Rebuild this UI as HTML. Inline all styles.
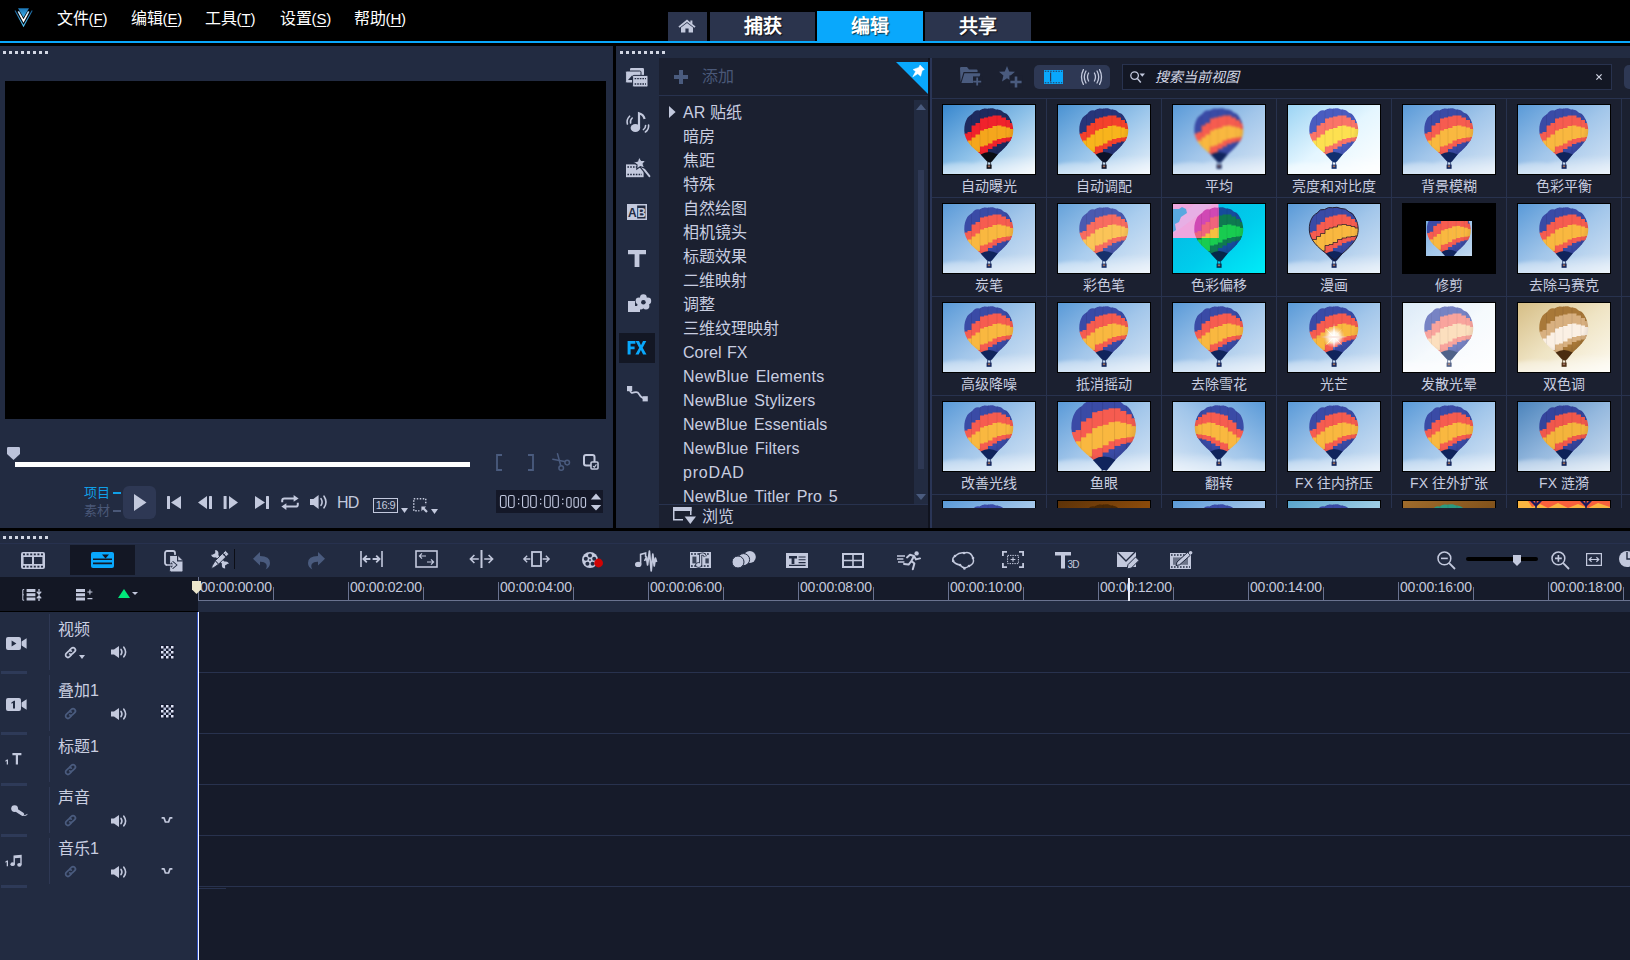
<!DOCTYPE html>
<html lang="zh-CN"><head><meta charset="utf-8"><title>Corel VideoStudio</title>
<style>
*{margin:0;padding:0;box-sizing:border-box}
html,body{width:1630px;height:960px;overflow:hidden;background:#000}
body{font-family:"Liberation Sans",sans-serif;color:#c3c9dd;position:relative;font-size:16px}
.a{position:absolute}
.p{position:absolute;background:#222b41}
svg{position:absolute;overflow:visible}
.dots{position:absolute;height:3px;width:45px;background:repeating-linear-gradient(90deg,#d3d7e4 0 3px,transparent 3px 6px)}
.menu{position:absolute;top:8px;height:22px;line-height:22px;font-size:16px;color:#fff;white-space:nowrap;letter-spacing:-.2px}
.menu u{text-decoration:underline;text-underline-offset:2px}
.tab{position:absolute;top:12px;height:29px;background:#2b344d;color:#fff;font-weight:bold;font-size:19px;line-height:30px;text-align:center;text-shadow:1px 1px 1px rgba(0,0,0,.7)}
.li{position:absolute;left:683px;height:24px;line-height:24px;font-size:16px;color:#c9cee0;white-space:nowrap}
.lb{position:absolute;width:115px;height:18px;line-height:18px;font-size:14px;text-align:center;color:#c9cee0;white-space:nowrap}
.th{position:absolute;width:94px;height:71px;border:1px solid #000;overflow:hidden;background:#9cc4e6}
.th svg{left:0;top:0;width:92px;height:69px}
.rl{position:absolute;top:579px;height:16px;line-height:16px;font-size:14px;letter-spacing:-.2px;color:#c3c9dd;white-space:nowrap}
.tn{position:absolute;left:58px;height:20px;line-height:20px;font-size:16px;color:#c9cee0;white-space:nowrap}
</style></head><body>
<svg style="left:14px;top:7px" width="20" height="20" viewBox="0 0 20 20">
<defs><linearGradient id="lg1" x1="0" y1="0" x2="0" y2="1"><stop offset="0" stop-color="#1c76b6"/><stop offset="1" stop-color="#3fb0e8"/></linearGradient>
<linearGradient id="lg2" x1="0" y1="0" x2="0" y2="1"><stop offset="0" stop-color="#175f98"/><stop offset="1" stop-color="#55c4f6"/></linearGradient>
<linearGradient id="lg3" x1="0" y1="0" x2="0" y2="1"><stop offset="0" stop-color="#a8d8f8"/><stop offset=".5" stop-color="#fff"/></linearGradient></defs>
<path d="M4 1.2H15L9.5 10.4Z" fill="url(#lg1)"/>
<path d="M4.3 4.4L9.5 14L14.7 4.4" fill="none" stroke="url(#lg3)" stroke-width="1.6"/>
<path d="M1 3.5L9.5 19L18.2 3.4" fill="none" stroke="url(#lg2)" stroke-width="1.1"/></svg>
<div class="menu" style="left:57px">文件<span style="font-size:15px">(<u>F</u>)</span></div>
<div class="menu" style="left:131px">编辑<span style="font-size:15px">(<u>E</u>)</span></div>
<div class="menu" style="left:205px">工具<span style="font-size:15px">(<u>T</u>)</span></div>
<div class="menu" style="left:280px">设置<span style="font-size:15px">(<u>S</u>)</span></div>
<div class="menu" style="left:354px">帮助<span style="font-size:15px">(<u>H</u>)</span></div>
<div class="tab" style="left:668px;width:39px"></div>
<svg style="left:678px;top:19px" width="18" height="14" viewBox="0 0 18 14"><path d="M9 0.6 L0.4 7.6 L1.6 8.8 L9 2.9 L16.4 8.8 L17.6 7.6 L14.4 5 L14.4 1.4 L12.4 1.4 L12.4 3.4Z M3 8.6 L9 3.9 L15 8.6 L15 13.6 L10.6 13.6 L10.6 9.6 L7.4 9.6 L7.4 13.6 L3 13.6Z" fill="#c3c9dd"/></svg>
<div class="tab" style="left:710px;width:105px">捕获</div>
<div class="tab" style="left:817px;width:106px;top:11px;height:30px;line-height:32px;background:#09a8fc">编辑</div>
<div class="tab" style="left:925px;width:106px">共享</div>
<div class="a" style="left:0;top:41px;width:1630px;height:2px;background:#09a8fc"></div>
<div class="p" style="left:0;top:46px;width:613px;height:482px"></div>
<div class="dots" style="left:3px;top:51px"></div>
<div class="a" style="left:5px;top:81px;width:601px;height:338px;background:#000"></div>
<svg style="left:7px;top:447px" width="13" height="13" viewBox="0 0 13 13"><path d="M1.2 0H11.8Q13 0 13 1.2V7L6.5 13L0 7V1.2Q0 0 1.2 0Z" fill="#bcc3da"/></svg>
<div class="a" style="left:15px;top:462px;width:455px;height:5px;background:#fff"></div>
<svg style="left:496px;top:454px" width="7" height="17" viewBox="0 0 7 17" ><path d="M6 1H1V16H6" fill="none" stroke="#4a5b7e" stroke-width="1.8"/></svg>
<svg style="left:527px;top:454px" width="7" height="17" viewBox="0 0 7 17" ><path d="M1 1H6V16H1" fill="none" stroke="#4a5b7e" stroke-width="1.8"/></svg>
<svg style="left:552px;top:453px" width="18" height="18" viewBox="0 0 18 18" ><g fill="none" stroke="#4a5b7e" stroke-width="1.5" stroke-linecap="round"><path d="M5.5 0.8L8.6 12.2"/><path d="M0.8 6.2L12.6 8.6"/><circle cx="9.2" cy="15" r="2.3"/><circle cx="15.2" cy="9.6" r="2.3"/></g></svg>
<svg style="left:583px;top:454px" width="16" height="16" viewBox="0 0 16 16" ><rect x="1" y="1" width="10.5" height="10.5" rx="2" fill="none" stroke="#c3c9dd" stroke-width="2"/><rect x="8" y="8" width="7" height="7" rx="1" fill="#222b41" stroke="#c3c9dd" stroke-width="1.6"/><path d="M10 12.2L11.4 13.2L13.4 10.4" fill="none" stroke="#c3c9dd" stroke-width="1.1"/></svg>
<div class="a" style="left:84px;top:484px;font-size:13px;line-height:18px;color:#10a0e8;white-space:nowrap">项目</div>
<div class="a" style="left:113px;top:492px;width:8px;height:2px;background:#10a0e8"></div>
<div class="a" style="left:84px;top:502px;font-size:13px;line-height:18px;color:#4a5878;white-space:nowrap">素材</div>
<div class="a" style="left:113px;top:510px;width:8px;height:2px;background:#4a5878"></div>
<div class="a" style="left:123px;top:486px;width:33px;height:33px;border-radius:6px;background:#2e3854"></div>
<svg style="left:134px;top:494px" width="13" height="17" viewBox="0 0 13 17" ><path d="M0 0L12.5 8.5L0 17Z" fill="#c3c9dd"/></svg>
<svg style="left:167px;top:496px" width="15" height="13" viewBox="0 0 15 13" ><rect x="0" y="0" width="3" height="13" rx=".6" fill="#c3c9dd"/><path d="M14 0V13L4 6.5Z" fill="#c3c9dd"/></svg>
<svg style="left:198px;top:496px" width="15" height="13" viewBox="0 0 15 13" ><path d="M9 0V13L0 6.5Z" fill="#c3c9dd"/><rect x="11" y="0" width="3" height="13" rx=".6" fill="#c3c9dd"/></svg>
<svg style="left:223px;top:496px" width="15" height="13" viewBox="0 0 15 13" ><rect x="0.6" y="0" width="3" height="13" rx=".6" fill="#c3c9dd"/><path d="M6 0V13L15 6.5Z" fill="#c3c9dd"/></svg>
<svg style="left:255px;top:496px" width="15" height="13" viewBox="0 0 15 13" ><path d="M0 0V13L10 6.5Z" fill="#c3c9dd"/><rect x="11" y="0" width="3" height="13" rx=".6" fill="#c3c9dd"/></svg>
<svg style="left:281px;top:495px" width="18" height="15" viewBox="0 0 18 15" ><g fill="none" stroke="#c3c9dd" stroke-width="2"><path d="M1.2 7.2V5.6Q1.2 3.4 3.4 3.4H13.4"/><path d="M16.8 7.8V9.4Q16.8 11.6 14.6 11.6H4.6"/></g><path d="M12.6 0L17.6 3.4L12.6 6.8Z" fill="#c3c9dd"/><path d="M5.4 8.2L0.4 11.6L5.4 15Z" fill="#c3c9dd"/></svg>
<svg style="left:310px;top:495px" width="19" height="14" viewBox="0 0 19 14" ><path d="M0 4H3.4L8.6 0V14L3.4 10H0Z" fill="#c3c9dd"/><path d="M11 3.6Q13.2 7 11 10.4M14 1.2Q18 7 14 12.8" fill="none" stroke="#c3c9dd" stroke-width="1.6" stroke-linecap="round"/></svg>
<div class="a" style="left:337px;top:494px;font-size:16px;line-height:18px;color:#c3c9dd;letter-spacing:-.8px">HD</div>
<div class="a" style="left:373px;top:498px;width:25px;height:15px;border:1px solid #c3c9dd;font-size:11px;line-height:13px;text-align:center;color:#c3c9dd;letter-spacing:-.5px">16:9</div>
<svg style="left:401px;top:508px" width="7" height="5" viewBox="0 0 7 5" ><path d="M0 0H7L3.5 5Z" fill="#c3c9dd"/></svg>
<svg style="left:413px;top:498px" width="15" height="15" viewBox="0 0 15 15" ><rect x=".75" y=".75" width="12" height="12" fill="none" stroke="#c3c9dd" stroke-width="1.5" stroke-dasharray="1.5 1.5"/><rect x="6.5" y="6.5" width="9" height="9" fill="#222b41"/><path d="M8.4 8.4H13.2L11.6 10L14.8 13.2L13.2 14.8L10 11.6L8.4 13.2Z" fill="#c3c9dd"/></svg>
<svg style="left:431px;top:509px" width="7" height="5" viewBox="0 0 7 5" ><path d="M0 0H7L3.5 5Z" fill="#c3c9dd"/></svg>
<div class="a" style="left:496px;top:490px;width:107px;height:23px;background:#141828"></div>
<svg style="left:496px;top:490px" width="107" height="23" viewBox="0 0 107 23" ><rect x="4.45" y="5.55" width="5.6" height="11.9" rx="1.6" fill="none" stroke="#c0c7de" stroke-width="1.1"/><rect x="12.55" y="5.55" width="5.6" height="11.9" rx="1.6" fill="none" stroke="#c0c7de" stroke-width="1.1"/><rect x="26.55" y="5.55" width="5.6" height="11.9" rx="1.6" fill="none" stroke="#c0c7de" stroke-width="1.1"/><rect x="34.65" y="5.55" width="5.6" height="11.9" rx="1.6" fill="none" stroke="#c0c7de" stroke-width="1.1"/><rect x="48.65" y="5.55" width="5.6" height="11.9" rx="1.6" fill="none" stroke="#c0c7de" stroke-width="1.1"/><rect x="56.75" y="5.55" width="5.6" height="11.9" rx="1.6" fill="none" stroke="#c0c7de" stroke-width="1.1"/><rect x="70.75" y="7.45" width="4.4" height="9.9" rx="1.6" fill="none" stroke="#c0c7de" stroke-width="1.1"/><rect x="77.95" y="7.45" width="4.4" height="9.9" rx="1.6" fill="none" stroke="#c0c7de" stroke-width="1.1"/><rect x="85.15" y="7.45" width="4.4" height="9.9" rx="1.6" fill="none" stroke="#c0c7de" stroke-width="1.1"/><rect x="22.0" y="8.6" width="1.3" height="1.4" fill="#c0c7de"/><rect x="22.0" y="13" width="1.3" height="1.4" fill="#c0c7de"/><rect x="44.0" y="8.6" width="1.3" height="1.4" fill="#c0c7de"/><rect x="44.0" y="13" width="1.3" height="1.4" fill="#c0c7de"/><rect x="66.1" y="8.6" width="1.3" height="1.4" fill="#c0c7de"/><rect x="66.1" y="13" width="1.3" height="1.4" fill="#c0c7de"/><path d="M94.8 9.4L100 3.6L105.2 9.4Z M94.8 15L100 20.6L105.2 15Z" fill="#c3c9dd"/></svg>
<div class="p" style="left:616px;top:46px;width:1014px;height:482px"></div>
<div class="dots" style="left:620px;top:51px"></div>
<svg style="left:625px;top:68px" width="23" height="19" viewBox="0 0 23 19" ><rect x="5" y="0" width="14" height="11" rx="1.2" fill="#c3c9dd"/><rect x="0.6" y="3" width="15.4" height="12" rx="1.2" fill="#c3c9dd" stroke="#222b41" stroke-width="1"/><path d="M3 12L7 7.4L10 12Z" fill="#222b41"/><rect x="7.6" y="7.4" width="15.4" height="11.6" rx="1.2" fill="#c3c9dd" stroke="#222b41" stroke-width="1"/><path d="M9.6 10.6H21M9.6 16H21" stroke="#222b41" stroke-width="1.4" stroke-dasharray="1.6 1"/></svg>
<svg style="left:626px;top:112px" width="24" height="21" viewBox="0 0 24 21" ><ellipse cx="9.4" cy="16" rx="4.8" ry="4" fill="#c3c9dd"/><path d="M13 16V1.2Q17.6 2.4 18.6 7" fill="none" stroke="#c3c9dd" stroke-width="2.2"/><path d="M6.2 6Q4 8 4.6 11M3.6 4.2Q0.2 7.6 1.4 12" fill="none" stroke="#c3c9dd" stroke-width="1.6" stroke-linecap="round"/><path d="M17.4 17.6Q19.6 16.4 19.6 13.6M19.4 20Q23 17.6 22.6 13" fill="none" stroke="#c3c9dd" stroke-width="1.6" stroke-linecap="round"/></svg>
<svg style="left:626px;top:157px" width="25" height="21" viewBox="0 0 25 21" ><rect x="0" y="7.4" width="17.6" height="12.8" fill="#c3c9dd"/><path d="M1.4 10H16M1.4 17.6H16" stroke="#222b41" stroke-width="1.5" stroke-dasharray="1.6 1.2"/><path d="M15 8.6L23.6 19.4" stroke="#222b41" stroke-width="4.2"/><path d="M15 8.6L23.4 19.2" stroke="#c3c9dd" stroke-width="2" stroke-linecap="round"/><path d="M13.0 -0.3L15.4 3.5L19.9 3.4L17.1 6.9L18.6 11.1L14.3 9.5L10.8 12.2L11.0 7.7L7.3 5.1L11.7 4.0Z" fill="#c3c9dd" stroke="#222b41" stroke-width="1.1"/></svg>
<svg style="left:627px;top:204px" width="20" height="16" viewBox="0 0 20 16" ><rect x=".75" y=".75" width="18.5" height="14.5" fill="none" stroke="#c3c9dd" stroke-width="1.5"/><rect x=".75" y=".75" width="9.4" height="14.5" fill="#c3c9dd"/><text x="5.3" y="12.6" font-family="Liberation Sans" font-weight="bold" font-size="12" text-anchor="middle" fill="#222b41">A</text><text x="14.6" y="12.6" font-family="Liberation Sans" font-weight="bold" font-size="12" text-anchor="middle" fill="#c3c9dd">B</text></svg>
<svg style="left:628px;top:250px" width="18" height="17" viewBox="0 0 18 17" ><path d="M0 0H18V4.2H11.4V17H6.6V4.2H0Z" fill="#c3c9dd"/></svg>
<svg style="left:628px;top:294px" width="23" height="18" viewBox="0 0 23 18" ><path d="M0 7H7V12H12V18H0Z" fill="#c3c9dd"/><g fill="#c3c9dd"><circle cx="15.4" cy="3.6" r="3.4"/><circle cx="19.8" cy="7" r="3.4"/><circle cx="18" cy="12" r="3.4"/><circle cx="12.6" cy="12" r="3.4"/><circle cx="11" cy="7" r="3.4"/></g><circle cx="15.4" cy="8.2" r="2.3" fill="#222b41"/></svg>
<div class="a" style="left:619px;top:333px;width:36px;height:30px;background:#131724"></div>
<svg style="left:627px;top:341px" width="20" height="14" viewBox="0 0 20 14" ><path d="M0.6 0H8.4V2.8H3.6V5.6H7.6V8.3H3.6V13.6H0.6Z" fill="#09a8fc"/><path d="M8.6 0H12L14 4.3L16 0H19.3L15.7 6.7L19.5 13.6H16.1L13.9 9.1L11.7 13.6H8.4L12.2 6.7Z" fill="#09a8fc"/></svg>
<svg style="left:627px;top:386px" width="21" height="16" viewBox="0 0 21 16" ><path d="M2.6 2.6C4 12 9 2 12 8C14 11.6 15.6 12.4 18 12.6" fill="none" stroke="#c3c9dd" stroke-width="1.7"/><rect x="0" y="0" width="5.2" height="5.2" fill="#c3c9dd"/><rect x="15.6" y="10.2" width="5.2" height="5.2" fill="#c3c9dd"/></svg>
<div class="a" style="left:659px;top:58px;width:269px;height:470px;background:#1b2030"></div>
<svg style="left:674px;top:70px" width="14" height="14" viewBox="0 0 14 14" ><path d="M5 0H9V5H14V9H9V14H5V9H0V5H5Z" fill="#4a5b7e"/></svg>
<div class="a" style="left:702px;top:66px;font-size:16px;line-height:22px;color:#4a5878;white-space:nowrap">添加</div>
<svg style="left:896px;top:62px" width="32" height="32" viewBox="0 0 32 32" ><path d="M0 0H32V32Z" fill="#09a8fc"/><path d="M24 3L28.4 7.4L26.2 8.6L24.6 14.2L21.8 11.8L16.8 14.8L19.6 9.6L17.1 7.6L22.8 5.4Z" fill="#fff" stroke="#fff" stroke-width=".5" stroke-linejoin="round"/></svg>
<div class="a" style="left:659px;top:95px;width:269px;height:1px;background:#28324e"></div>
<div class="a" style="left:0;top:96px;width:914px;height:408px;overflow:hidden">
<svg style="left:669px;top:10px" width="7" height="12" viewBox="0 0 7 12" ><path d="M0 0L6.6 6L0 12Z" fill="#c3c9dd"/></svg>
<div class="li" style="top:5px;letter-spacing:0px;word-spacing:0px">AR 贴纸</div>
<div class="li" style="top:29px;letter-spacing:0px;word-spacing:0px">暗房</div>
<div class="li" style="top:53px;letter-spacing:0px;word-spacing:0px">焦距</div>
<div class="li" style="top:77px;letter-spacing:0px;word-spacing:0px">特殊</div>
<div class="li" style="top:101px;letter-spacing:0px;word-spacing:0px">自然绘图</div>
<div class="li" style="top:125px;letter-spacing:0px;word-spacing:0px">相机镜头</div>
<div class="li" style="top:149px;letter-spacing:0px;word-spacing:0px">标题效果</div>
<div class="li" style="top:173px;letter-spacing:0px;word-spacing:0px">二维映射</div>
<div class="li" style="top:197px;letter-spacing:0px;word-spacing:0px">调整</div>
<div class="li" style="top:221px;letter-spacing:0px;word-spacing:0px">三维纹理映射</div>
<div class="li" style="top:245px;letter-spacing:0.05px;word-spacing:1px">Corel FX</div>
<div class="li" style="top:269px;letter-spacing:0.27px;word-spacing:2.0px">NewBlue Elements</div>
<div class="li" style="top:293px;letter-spacing:0.09px;word-spacing:2.0px">NewBlue Stylizers</div>
<div class="li" style="top:317px;letter-spacing:0.05px;word-spacing:2.0px">NewBlue Essentials</div>
<div class="li" style="top:341px;letter-spacing:0.18px;word-spacing:2.0px">NewBlue Filters</div>
<div class="li" style="top:365px;letter-spacing:0.8px;word-spacing:0px">proDAD</div>
<div class="li" style="top:389px;letter-spacing:0.1px;word-spacing:2.3px">NewBlue Titler Pro 5</div>
</div>
<div class="a" style="left:914px;top:100px;width:14px;height:404px;background:#222b41"></div>
<svg style="left:916px;top:104px" width="10" height="6" viewBox="0 0 10 6" ><path d="M0 6L5 0L10 6Z" fill="#4a5b7e"/></svg>
<div class="a" style="left:918px;top:170px;width:6px;height:299px;background:#2e3854"></div>
<svg style="left:916px;top:494px" width="10" height="6" viewBox="0 0 10 6" ><path d="M0 0L5 6L10 0Z" fill="#4a5b7e"/></svg>
<div class="a" style="left:659px;top:504px;width:269px;height:1px;background:#28324e"></div>
<svg style="left:673px;top:507px" width="23" height="17" viewBox="0 0 23 17" ><rect x=".75" y=".75" width="17" height="12" fill="none" stroke="#c3c9dd" stroke-width="1.5"/><rect x="0" y="0" width="18.5" height="4" fill="#c3c9dd"/><rect x="10" y="8" width="14" height="10" fill="#1b2030"/><path d="M11.6 9.4H23L17.3 17Z" fill="#c3c9dd"/></svg>
<div class="a" style="left:702px;top:506px;font-size:16px;line-height:22px;color:#c9cee0;white-space:nowrap">浏览</div>
<div class="a" style="left:928px;top:58px;width:2px;height:470px;background:#10131e"></div>
<div class="a" style="left:930px;top:58px;width:2px;height:470px;background:#2a3556"></div>
<div class="a" style="left:932px;top:58px;width:698px;height:470px;background:#1b2030"></div>
<div class="a" style="left:932px;top:98px;width:698px;height:1px;background:#28324e"></div>
<svg width="0" height="0" style="position:absolute"><defs>
<linearGradient id="skyV" x1="0" y1="0" x2="1" y2="1"><stop offset="0" stop-color="#3887ce"/><stop offset=".5" stop-color="#8cc0e8"/><stop offset="1" stop-color="#eef5fb"/></linearGradient>
<linearGradient id="skyV2" x1="0" y1="0" x2="1" y2="1"><stop offset="0" stop-color="#4a92d2"/><stop offset=".5" stop-color="#98c4ea"/><stop offset="1" stop-color="#e8f1fa"/></linearGradient>
<linearGradient id="skyPA" x1="0" y1="0" x2="1" y2="1"><stop offset="0" stop-color="#5a9ad8"/><stop offset=".5" stop-color="#a2c6ea"/><stop offset="1" stop-color="#d6e5f5"/></linearGradient>
<linearGradient id="skyBR" x1="0" y1="0" x2="1" y2="1"><stop offset="0" stop-color="#9cd4f4"/><stop offset=".5" stop-color="#e4f6ff"/><stop offset="1" stop-color="#ffffff"/></linearGradient>
<linearGradient id="skyP2" x1="0" y1="0" x2="1" y2="1"><stop offset="0" stop-color="#66a2da"/><stop offset=".5" stop-color="#aacdee"/><stop offset="1" stop-color="#dde9f6"/></linearGradient>
<linearGradient id="skyGL" x1="0" y1="0" x2="1" y2="1"><stop offset="0" stop-color="#d4e6f6"/><stop offset=".5" stop-color="#f4f9fd"/><stop offset="1" stop-color="#ffffff"/></linearGradient>
<linearGradient id="skySE" x1="0" y1="0" x2="1" y2="1"><stop offset="0" stop-color="#d6be86"/><stop offset=".5" stop-color="#efe4c4"/><stop offset="1" stop-color="#fdfaf0"/></linearGradient>
<linearGradient id="skyDK" x1="0" y1="0" x2="1" y2="1"><stop offset="0" stop-color="#4c84bc"/><stop offset=".5" stop-color="#94b8de"/><stop offset="1" stop-color="#cfdff0"/></linearGradient>
<linearGradient id="skyOR" x1="0" y1="0" x2="1" y2="1"><stop offset="0" stop-color="#5c3208"/><stop offset=".5" stop-color="#8a4a0a"/><stop offset="1" stop-color="#a8580a"/></linearGradient>
<linearGradient id="skyCY" x1="0" y1="0" x2="1" y2="1"><stop offset="0" stop-color="#58a4cc"/><stop offset=".5" stop-color="#9ccce4"/><stop offset="1" stop-color="#c8e4f2"/></linearGradient>
<linearGradient id="skyBN" x1="0" y1="0" x2="1" y2="1"><stop offset="0" stop-color="#a06c2c"/><stop offset=".5" stop-color="#84541c"/><stop offset="1" stop-color="#684010"/></linearGradient>
<linearGradient id="cl" x1="0" y1="0" x2="0" y2="1"><stop offset="0" stop-color="#fff" stop-opacity="0"/><stop offset=".5" stop-color="#fff" stop-opacity=".4"/><stop offset="1" stop-color="#fff" stop-opacity=".6"/></linearGradient>
<radialGradient id="shade" cx=".45" cy=".35" r=".7"><stop offset=".6" stop-color="#000" stop-opacity="0"/><stop offset="1" stop-color="#000" stop-opacity=".22"/></radialGradient>
<radialGradient id="gl"><stop offset="0" stop-color="#fff"/><stop offset=".45" stop-color="#fff" stop-opacity=".85"/><stop offset="1" stop-color="#ffd8d0" stop-opacity="0"/></radialGradient>
<clipPath id="env"><path d="M21.3 26C21 16 25.5 10.5 29 9.2Q32 4.4 36.6 5.5Q40.2 2.6 44.6 3.7Q49.2 2.5 53 4.5Q57.6 4 61 7.8Q65.2 9 67 13.6C70 18.6 71 25 69.6 30.6C68 37 61 44 54.6 49.4L47 56.4L38 49.4C30 43.4 21.6 36 21.3 26Z"/></clipPath>
<symbol id="bl" viewBox="0 0 92 69" overflow="visible"><g clip-path="url(#env)"><rect x="20" y="0" width="5.1" height="29.1" fill="var(--n)"/><rect x="20" y="28.5" width="5.1" height="9.1" fill="var(--r)"/><rect x="20" y="37" width="5.1" height="33.6" fill="var(--y)"/><rect x="24.5" y="0" width="4.6" height="27.6" fill="var(--n)"/><rect x="24.5" y="27" width="4.6" height="9.1" fill="var(--r)"/><rect x="24.5" y="35.5" width="4.6" height="35.1" fill="var(--y)"/><rect x="28.5" y="0" width="4.6" height="21.1" fill="var(--n)"/><rect x="28.5" y="20.5" width="4.6" height="12.6" fill="var(--r)"/><rect x="28.5" y="32.5" width="4.6" height="38.1" fill="var(--y)"/><rect x="32.5" y="0" width="5.1" height="18.6" fill="var(--n)"/><rect x="32.5" y="18" width="5.1" height="12.1" fill="var(--r)"/><rect x="32.5" y="29.5" width="5.1" height="18.1" fill="var(--y)"/><rect x="32.5" y="47" width="5.1" height="23.6" fill="var(--r)"/><rect x="37" y="0" width="4.6" height="14.1" fill="var(--n)"/><rect x="37" y="13.5" width="4.6" height="12.6" fill="var(--r)"/><rect x="37" y="25.5" width="4.6" height="16.6" fill="var(--y)"/><rect x="37" y="41.5" width="4.6" height="29.1" fill="var(--r)"/><rect x="41" y="0" width="4.6" height="13.1" fill="var(--n)"/><rect x="41" y="12.5" width="4.6" height="12.1" fill="var(--r)"/><rect x="41" y="24" width="4.6" height="17.1" fill="var(--y)"/><rect x="41" y="40.5" width="4.6" height="30.1" fill="var(--r)"/><rect x="45" y="0" width="5.1" height="12.1" fill="var(--n)"/><rect x="45" y="11.5" width="5.1" height="12.1" fill="var(--r)"/><rect x="45" y="23" width="5.1" height="16.1" fill="var(--y)"/><rect x="45" y="38.5" width="5.1" height="6.1" fill="var(--r)"/><rect x="45" y="44" width="5.1" height="26.6" fill="var(--n)"/><rect x="49.5" y="0" width="5.1" height="11.1" fill="var(--n)"/><rect x="49.5" y="10.5" width="5.1" height="11.1" fill="var(--r)"/><rect x="49.5" y="21" width="5.1" height="15.1" fill="var(--y)"/><rect x="49.5" y="35.5" width="5.1" height="6.6" fill="var(--r)"/><rect x="49.5" y="41.5" width="5.1" height="29.1" fill="var(--n)"/><rect x="54" y="0" width="5.1" height="11.1" fill="var(--n)"/><rect x="54" y="10.5" width="5.1" height="10.6" fill="var(--r)"/><rect x="54" y="20.5" width="5.1" height="14.1" fill="var(--y)"/><rect x="54" y="34" width="5.1" height="5.6" fill="var(--r)"/><rect x="54" y="39" width="5.1" height="31.6" fill="var(--n)"/><rect x="58.5" y="0" width="5.1" height="13.1" fill="var(--n)"/><rect x="58.5" y="12.5" width="5.1" height="9.6" fill="var(--r)"/><rect x="58.5" y="21.5" width="5.1" height="12.1" fill="var(--y)"/><rect x="58.5" y="33" width="5.1" height="5.1" fill="var(--r)"/><rect x="58.5" y="37.5" width="5.1" height="33.1" fill="var(--n)"/><rect x="63" y="0" width="4.6" height="15.6" fill="var(--n)"/><rect x="63" y="15" width="4.6" height="8.1" fill="var(--r)"/><rect x="63" y="22.5" width="4.6" height="10.6" fill="var(--y)"/><rect x="63" y="32.5" width="4.6" height="4.6" fill="var(--r)"/><rect x="63" y="36.5" width="4.6" height="34.1" fill="var(--n)"/><rect x="67" y="0" width="5.6" height="18.6" fill="var(--n)"/><rect x="67" y="18" width="5.6" height="6.6" fill="var(--r)"/><rect x="67" y="24" width="5.6" height="8.6" fill="var(--y)"/><rect x="67" y="32" width="5.6" height="4.1" fill="var(--r)"/><rect x="67" y="35.5" width="5.6" height="35.1" fill="var(--n)"/><path d="M28.5 8V50M37 5V52M45 3V55M54 4V50M63 8V44" stroke="#000" stroke-opacity=".12" stroke-width=".6"/><rect x="20" y="3" width="52" height="55" fill="url(#shade)"/></g>
<path d="M37.6 49.6Q46 44.6 54.6 49.6L49 56.6Q46.4 58.4 44 56.6Z" fill="var(--k)"/><path d="M44.6 57V60M47.6 57V60" stroke="var(--k)" stroke-width=".7"/><rect x="43.6" y="59.6" width="5" height="4.2" fill="var(--k)"/><rect x="44.8" y="60.4" width="2.4" height="1.8" fill="#9a6a58"/></symbol>
</defs></svg>
<div class="a" style="left:932px;top:99px;width:698px;height:409px;overflow:hidden">
<div class="a" style="left:114px;top:0;width:1px;height:409px;background:#28324e"></div>
<div class="a" style="left:229px;top:0;width:1px;height:409px;background:#28324e"></div>
<div class="a" style="left:344px;top:0;width:1px;height:409px;background:#28324e"></div>
<div class="a" style="left:459px;top:0;width:1px;height:409px;background:#28324e"></div>
<div class="a" style="left:574px;top:0;width:1px;height:409px;background:#28324e"></div>
<div class="a" style="left:689px;top:0;width:1px;height:409px;background:#28324e"></div>
<div class="a" style="left:0;top:98px;width:698px;height:1px;background:#28324e"></div>
<div class="a" style="left:0;top:197px;width:698px;height:1px;background:#28324e"></div>
<div class="a" style="left:0;top:296px;width:698px;height:1px;background:#28324e"></div>
<div class="a" style="left:0;top:395px;width:698px;height:1px;background:#28324e"></div>
<div class="th" style="left:10px;top:5px"><svg viewBox="0 0 92 69" style="--n:#1e2a5e;--r:#f0222c;--y:#f5a61c;--k:#0a0c14"><rect width="92" height="69" fill="url(#skyV)"/><path style="filter:blur(1.8px)" d="M-4 60Q14 55 30 58Q46 54 58 53Q74 49 96 50V74H-4Z" fill="url(#cl)"/><use href="#bl" width="92" height="69"/></svg></div>
<div class="lb" style="left:-0.5px;top:78px">自动曝光</div>
<div class="th" style="left:125px;top:5px"><svg viewBox="0 0 92 69" style="--n:#27357a;--r:#f4402c;--y:#f8b41c;--k:#0c1228"><rect width="92" height="69" fill="url(#skyV2)"/><path style="filter:blur(1.8px)" d="M-4 60Q14 55 30 58Q46 54 58 53Q74 49 96 50V74H-4Z" fill="url(#cl)"/><use href="#bl" width="92" height="69"/></svg></div>
<div class="lb" style="left:114.5px;top:78px">自动调配</div>
<div class="th" style="left:240px;top:5px"><svg viewBox="0 0 92 69" style="--n:#3a4ba6;--r:#f65c50;--y:#f9b840;--k:#10245c"><rect width="92" height="69" fill="url(#skyPA)"/><path style="filter:blur(1.8px)" d="M-4 60Q14 55 30 58Q46 54 58 53Q74 49 96 50V74H-4Z" fill="url(#cl)"/><g style="filter:blur(1.3px)"><use href="#bl" width="92" height="69"/></g></svg></div>
<div class="lb" style="left:229.5px;top:78px">平均</div>
<div class="th" style="left:355px;top:5px"><svg viewBox="0 0 92 69" style="--n:#4a5cc0;--r:#fa7468;--y:#fde050;--k:#123070"><rect width="92" height="69" fill="url(#skyBR)"/><path style="filter:blur(1.8px)" d="M-4 60Q14 55 30 58Q46 54 58 53Q74 49 96 50V74H-4Z" fill="url(#cl)"/><use href="#bl" width="92" height="69"/></svg></div>
<div class="lb" style="left:344.5px;top:78px">亮度和对比度</div>
<div class="th" style="left:470px;top:5px"><svg viewBox="0 0 92 69" style="--n:#3a4ba6;--r:#f65c50;--y:#f9b840;--k:#10245c"><rect width="92" height="69" fill="url(#skyPA)"/><path style="filter:blur(1.8px)" d="M-4 60Q14 55 30 58Q46 54 58 53Q74 49 96 50V74H-4Z" fill="url(#cl)"/><use href="#bl" width="92" height="69"/></svg></div>
<div class="lb" style="left:459.5px;top:78px">背景模糊</div>
<div class="th" style="left:585px;top:5px"><svg viewBox="0 0 92 69" style="--n:#3a4ba6;--r:#f65c50;--y:#f9b840;--k:#10245c"><rect width="92" height="69" fill="url(#skyPA)"/><path style="filter:blur(1.8px)" d="M-4 60Q14 55 30 58Q46 54 58 53Q74 49 96 50V74H-4Z" fill="url(#cl)"/><use href="#bl" width="92" height="69"/></svg></div>
<div class="lb" style="left:574.5px;top:78px">色彩平衡</div>
<div class="th" style="left:10px;top:104px"><svg viewBox="0 0 92 69" style="--n:#3a4ba6;--r:#f65c50;--y:#f9b840;--k:#10245c"><rect width="92" height="69" fill="url(#skyPA)"/><path style="filter:blur(1.8px)" d="M-4 60Q14 55 30 58Q46 54 58 53Q74 49 96 50V74H-4Z" fill="url(#cl)"/><use href="#bl" width="92" height="69"/></svg></div>
<div class="lb" style="left:-0.5px;top:177px">炭笔</div>
<div class="th" style="left:125px;top:104px"><svg viewBox="0 0 92 69" style="--n:#4a5ab0;--r:#f86c60;--y:#fbc458;--k:#16306c"><rect width="92" height="69" fill="url(#skyP2)"/><path style="filter:blur(1.8px)" d="M-4 60Q14 55 30 58Q46 54 58 53Q74 49 96 50V74H-4Z" fill="url(#cl)"/><use href="#bl" width="92" height="69"/></svg></div>
<div class="lb" style="left:114.5px;top:177px">彩色笔</div>
<div class="th" style="left:240px;top:104px"><svg viewBox="0 0 92 69"><defs><linearGradient id="cyg" x1="0" y1="0" x2="1" y2="1"><stop offset="0" stop-color="#04b4e0"/><stop offset=".55" stop-color="#00ccec"/><stop offset="1" stop-color="#00ecf8"/></linearGradient></defs><rect width="92" height="69" fill="url(#cyg)"/><g style="--n:#164c9c;--r:#0e7a50;--y:#18cc50;--k:#06284a"><use href="#bl" width="92" height="69"/></g><clipPath id="cs"><rect width="45.5" height="34"/></clipPath><g clip-path="url(#cs)"><rect width="46" height="34" fill="#efa6de"/><path d="M22 0L40 0L0 30L0 16Z" fill="#e4b4e8" opacity=".7"/><path d="M0 5H6L9 3L13 5L14 9L8 13L6 18L2 20L3 26L0 28Z" fill="#58a8e0"/><g style="--n:#d048b4;--r:#f0647c;--y:#f4c040;--k:#702070"><use href="#bl" width="92" height="69"/></g></g></svg></div>
<div class="lb" style="left:229.5px;top:177px">色彩偏移</div>
<div class="th" style="left:355px;top:104px"><svg viewBox="0 0 92 69" style="--n:#3a4ba6;--r:#f65c50;--y:#f9b840;--k:#10245c"><rect width="92" height="69" fill="url(#skyPA)"/><path style="filter:blur(1.8px)" d="M-4 60Q14 55 30 58Q46 54 58 53Q74 49 96 50V74H-4Z" fill="url(#cl)"/><use href="#bl" width="92" height="69"/><path d="M21.3 26C21 16 25.5 10.5 29 9.2Q32 4.4 36.6 5.5Q40.2 2.6 44.6 3.7Q49.2 2.5 53 4.5Q57.6 4 61 7.8Q65.2 9 67 13.6C70 18.6 71 25 69.6 30.6C68 37 61 44 54.6 49.4L47 56.4L38 49.4C30 43.4 21.6 36 21.3 26Z" fill="none" stroke="#201828" stroke-width=".9"/><path clip-path="url(#env)" d="M20 37H24.5V35.5H28.5V32.5H32.5V29.5H37V25.5H41V24H45V23H49.5V21H54V20.5H58.5V21.5H63V22.5H67V24H72M32.5 47H37V41.5H41V40.5H45V38.5H49.5V35.5H54V34H58.5V33H63V32.5H67V32H72" fill="none" stroke="#201828" stroke-width=".7"/></svg></div>
<div class="lb" style="left:344.5px;top:177px">漫画</div>
<div class="th" style="left:470px;top:104px"><svg viewBox="0 0 92 69" style="--n:#3a4ba6;--r:#f65c50;--y:#f9b840;--k:#10245c"><rect width="92" height="69" fill="#000"/><clipPath id="cr"><rect x="23" y="17" width="46" height="35"/></clipPath><g clip-path="url(#cr)"><g transform="translate(46 34.5) scale(.9) translate(-46 -34.5)"><rect width="92" height="69" fill="url(#skyPA)"/><path style="filter:blur(1.8px)" d="M-4 60Q14 55 30 58Q46 54 58 53Q74 49 96 50V74H-4Z" fill="url(#cl)"/><use href="#bl" width="92" height="69"/></g></g></svg></div>
<div class="lb" style="left:459.5px;top:177px">修剪</div>
<div class="th" style="left:585px;top:104px"><svg viewBox="0 0 92 69" style="--n:#3a4ba6;--r:#f65c50;--y:#f9b840;--k:#10245c"><rect width="92" height="69" fill="url(#skyPA)"/><path style="filter:blur(1.8px)" d="M-4 60Q14 55 30 58Q46 54 58 53Q74 49 96 50V74H-4Z" fill="url(#cl)"/><use href="#bl" width="92" height="69"/></svg></div>
<div class="lb" style="left:574.5px;top:177px">去除马赛克</div>
<div class="th" style="left:10px;top:203px"><svg viewBox="0 0 92 69" style="--n:#3a4ba6;--r:#f65c50;--y:#f9b840;--k:#10245c"><rect width="92" height="69" fill="url(#skyPA)"/><path style="filter:blur(1.8px)" d="M-4 60Q14 55 30 58Q46 54 58 53Q74 49 96 50V74H-4Z" fill="url(#cl)"/><use href="#bl" width="92" height="69"/></svg></div>
<div class="lb" style="left:-0.5px;top:276px">高级降噪</div>
<div class="th" style="left:125px;top:203px"><svg viewBox="0 0 92 69" style="--n:#3a4ba6;--r:#f65c50;--y:#f9b840;--k:#10245c"><rect width="92" height="69" fill="url(#skyPA)"/><path style="filter:blur(1.8px)" d="M-4 60Q14 55 30 58Q46 54 58 53Q74 49 96 50V74H-4Z" fill="url(#cl)"/><use href="#bl" width="92" height="69"/></svg></div>
<div class="lb" style="left:114.5px;top:276px">抵消摇动</div>
<div class="th" style="left:240px;top:203px"><svg viewBox="0 0 92 69" style="--n:#3a4ba6;--r:#f65c50;--y:#f9b840;--k:#10245c"><rect width="92" height="69" fill="url(#skyPA)"/><path style="filter:blur(1.8px)" d="M-4 60Q14 55 30 58Q46 54 58 53Q74 49 96 50V74H-4Z" fill="url(#cl)"/><use href="#bl" width="92" height="69"/></svg></div>
<div class="lb" style="left:229.5px;top:276px">去除雪花</div>
<div class="th" style="left:355px;top:203px"><svg viewBox="0 0 92 69" style="--n:#3a4ba6;--r:#f65c50;--y:#f9b840;--k:#10245c"><rect width="92" height="69" fill="url(#skyPA)"/><path style="filter:blur(1.8px)" d="M-4 60Q14 55 30 58Q46 54 58 53Q74 49 96 50V74H-4Z" fill="url(#cl)"/><use href="#bl" width="92" height="69"/><circle cx="46" cy="34" r="11" fill="url(#gl)"/><path d="M46 20L47 33L60 34L47 35L46 48L45 35L32 34L45 33Z M37 25L46.6 33.4L55 25L46.8 34L55 43L46 34.8L37 43L45.2 34Z" fill="#fff" opacity=".9"/><path d="M22 34H70" stroke="#e08060" stroke-width=".5" opacity=".7"/></svg></div>
<div class="lb" style="left:344.5px;top:276px">光芒</div>
<div class="th" style="left:470px;top:203px"><svg viewBox="0 0 92 69" style="--n:#5a68b8;--r:#f89088;--y:#fcd8b0;--k:#2a4070"><rect width="92" height="69" fill="url(#skyGL)"/><path style="filter:blur(1.8px)" d="M-4 60Q14 55 30 58Q46 54 58 53Q74 49 96 50V74H-4Z" fill="url(#cl)"/><g style="filter:blur(.7px)"><use href="#bl" width="92" height="69"/></g><rect width="92" height="69" fill="#fff" opacity=".18"/></svg></div>
<div class="lb" style="left:459.5px;top:276px">发散光晕</div>
<div class="th" style="left:585px;top:203px"><svg viewBox="0 0 92 69" style="--n:#a87838;--r:#d8b080;--y:#fbf0e4;--k:#4a2c10"><rect width="92" height="69" fill="url(#skySE)"/><path style="filter:blur(1.8px)" d="M-4 60Q14 55 30 58Q46 54 58 53Q74 49 96 50V74H-4Z" fill="url(#cl)"/><use href="#bl" width="92" height="69"/></svg></div>
<div class="lb" style="left:574.5px;top:276px">双色调</div>
<div class="th" style="left:10px;top:302px"><svg viewBox="0 0 92 69" style="--n:#3a4ba6;--r:#f65c50;--y:#f9b840;--k:#10245c"><rect width="92" height="69" fill="url(#skyPA)"/><path style="filter:blur(1.8px)" d="M-4 60Q14 55 30 58Q46 54 58 53Q74 49 96 50V74H-4Z" fill="url(#cl)"/><use href="#bl" width="92" height="69"/></svg></div>
<div class="lb" style="left:-0.5px;top:375px">改善光线</div>
<div class="th" style="left:125px;top:302px"><svg viewBox="0 0 92 69" style="--n:#3a4ba6;--r:#f65c50;--y:#f9b840;--k:#10245c"><rect width="92" height="69" fill="url(#skyPA)"/><path style="filter:blur(1.8px)" d="M-4 60Q14 55 30 58Q46 54 58 53Q74 49 96 50V74H-4Z" fill="url(#cl)"/><g transform="translate(46 36) scale(1.32) translate(-46 -33)"><use href="#bl" width="92" height="69"/></g></svg></div>
<div class="lb" style="left:114.5px;top:375px">鱼眼</div>
<div class="th" style="left:240px;top:302px"><svg viewBox="0 0 92 69" style="--n:#3a4ba6;--r:#f65c50;--y:#f9b840;--k:#10245c"><g transform="translate(92 0) scale(-1 1)"><rect width="92" height="69" fill="url(#skyPA)"/><path style="filter:blur(1.8px)" d="M-4 60Q14 55 30 58Q46 54 58 53Q74 49 96 50V74H-4Z" fill="url(#cl)"/><use href="#bl" width="92" height="69"/></g></svg></div>
<div class="lb" style="left:229.5px;top:375px">翻转</div>
<div class="th" style="left:355px;top:302px"><svg viewBox="0 0 92 69" style="--n:#3a4ba6;--r:#f65c50;--y:#f9b840;--k:#10245c"><rect width="92" height="69" fill="url(#skyPA)"/><path style="filter:blur(1.8px)" d="M-4 60Q14 55 30 58Q46 54 58 53Q74 49 96 50V74H-4Z" fill="url(#cl)"/><use href="#bl" width="92" height="69"/></svg></div>
<div class="lb" style="left:344.5px;top:375px">FX 往内挤压</div>
<div class="th" style="left:470px;top:302px"><svg viewBox="0 0 92 69" style="--n:#3a4ba6;--r:#f65c50;--y:#f9b840;--k:#10245c"><rect width="92" height="69" fill="url(#skyPA)"/><path style="filter:blur(1.8px)" d="M-4 60Q14 55 30 58Q46 54 58 53Q74 49 96 50V74H-4Z" fill="url(#cl)"/><use href="#bl" width="92" height="69"/></svg></div>
<div class="lb" style="left:459.5px;top:375px">FX 往外扩张</div>
<div class="th" style="left:585px;top:302px"><svg viewBox="0 0 92 69" style="--n:#34449c;--r:#f0584c;--y:#f4b43c;--k:#0e2258"><rect width="92" height="69" fill="url(#skyDK)"/><path style="filter:blur(1.8px)" d="M-4 60Q14 55 30 58Q46 54 58 53Q74 49 96 50V74H-4Z" fill="url(#cl)"/><use href="#bl" width="92" height="69"/></svg></div>
<div class="lb" style="left:574.5px;top:375px">FX 涟漪</div>
<div class="th" style="left:10px;top:401px"><svg viewBox="0 0 92 69" style="--n:#3a4ba6;--r:#f65c50;--y:#f9b840;--k:#10245c"><rect width="92" height="69" fill="url(#skyPA)"/><path style="filter:blur(1.8px)" d="M-4 60Q14 55 30 58Q46 54 58 53Q74 49 96 50V74H-4Z" fill="url(#cl)"/><use href="#bl" width="92" height="69"/></svg></div>
<div class="th" style="left:125px;top:401px"><svg viewBox="0 0 92 69" style="--n:#4a2804;--r:#5a3006;--y:#6a3808;--k:#2a1602"><rect width="92" height="69" fill="url(#skyOR)"/><path style="filter:blur(1.8px)" d="M-4 60Q14 55 30 58Q46 54 58 53Q74 49 96 50V74H-4Z" fill="url(#cl)"/><use href="#bl" width="92" height="69"/></svg></div>
<div class="th" style="left:240px;top:401px"><svg viewBox="0 0 92 69" style="--n:#3a4ba6;--r:#f65c50;--y:#f9b840;--k:#10245c"><rect width="92" height="69" fill="url(#skyPA)"/><path style="filter:blur(1.8px)" d="M-4 60Q14 55 30 58Q46 54 58 53Q74 49 96 50V74H-4Z" fill="url(#cl)"/><use href="#bl" width="92" height="69"/></svg></div>
<div class="th" style="left:355px;top:401px"><svg viewBox="0 0 92 69" style="--n:#3a4ba6;--r:#f65c50;--y:#f9b840;--k:#10245c"><rect width="92" height="69" fill="url(#skyCY)"/><path style="filter:blur(1.8px)" d="M-4 60Q14 55 30 58Q46 54 58 53Q74 49 96 50V74H-4Z" fill="url(#cl)"/><use href="#bl" width="92" height="69"/></svg></div>
<div class="th" style="left:470px;top:401px"><svg viewBox="0 0 92 69" style="--n:#2a9a80;--r:#e8c040;--y:#f0d060;--k:#2a1602"><rect width="92" height="69" fill="url(#skyBN)"/><path style="filter:blur(1.8px)" d="M-4 60Q14 55 30 58Q46 54 58 53Q74 49 96 50V74H-4Z" fill="url(#cl)"/><use href="#bl" width="92" height="69"/></svg></div>
<div class="th" style="left:585px;top:401px"><svg viewBox="0 0 92 69"><rect width="92" height="69" fill="#f8603c"/><path d="M0 0H10L14 6L22 3L30 7L40 2L50 7L60 3L70 7L80 2L92 6V10H0Z" fill="#fbbf40" opacity=".9"/><path d="M12 0L18 6L24 0L21 0L18 3L15 0ZM62 0L68 6L74 0L71 0L68 3L65 0Z" fill="#1a1a5c"/><path d="M18 0V7M68 0V7" stroke="#1a1a5c" stroke-width="1.6"/></svg></div>
</div>
<svg style="left:960px;top:67px" width="22" height="19" viewBox="0 0 22 19" ><path d="M0 1.2Q0 0 1.2 0H7L9 2.4H16.4Q17.6 2.4 17.6 3.6V5H3.6L0.6 15Z" fill="#4a5b7e"/><path d="M4.4 6.2H19.4Q20.6 6.2 20.2 7.4L17.6 16H1.4Z" fill="#4a5b7e"/><rect x="13" y="9.4" width="9.4" height="9.8" fill="#1b2030"/><path d="M17.2 10.6V18.6M13.2 14.6H21.2" stroke="#4a5b7e" stroke-width="1.8"/></svg>
<svg style="left:999px;top:66px" width="23" height="22" viewBox="0 0 23 22" ><path d="M8 0L10.2 5.4L16 5.8L11.6 9.6L13 15.4L8 12.2L3 15.4L4.4 9.6L0 5.8L5.8 5.4Z" fill="#4a5b7e"/><rect x="10.4" y="9.4" width="13" height="13" fill="#1b2030"/><path d="M17 10.4V21.6M11.4 16H22.6" stroke="#4a5b7e" stroke-width="2.6"/></svg>
<div class="a" style="left:1034px;top:65px;width:76px;height:24px;border-radius:5px;background:#2e3854"></div>
<svg style="left:1044px;top:70px" width="19" height="14" viewBox="0 0 19 14" ><rect x="0" y="0" width="19" height="14" fill="#09a8fc"/><path d="M0.8 1.3H18.2M0.8 12.7H18.2" stroke="#2e3854" stroke-width="1.1" stroke-dasharray="1.5 1.2"/><path d="M6.6 2.6V11.4" stroke="#2e3854" stroke-width="1.2"/></svg>
<svg style="left:1081px;top:69px" width="21" height="16" viewBox="0 0 21 16" ><g fill="none" stroke="#c3c9dd" stroke-width="1.3" stroke-linecap="round"><path d="M7.6 4Q5.4 8 7.6 12M13.4 4Q15.6 8 13.4 12"/><path d="M5 2Q1.6 8 5 14M16 2Q19.4 8 16 14"/><path d="M2.4 0.6Q-1.4 8 2.4 15.4M18.6 0.6Q22.4 8 18.6 15.4"/></g></svg>
<div class="a" style="left:1122px;top:64px;width:490px;height:26px;border:1px solid #28324e;background:#131724"></div>
<svg style="left:1130px;top:71px" width="15" height="12" viewBox="0 0 15 12" ><circle cx="4.6" cy="4.6" r="3.8" fill="none" stroke="#c3c9dd" stroke-width="1.3"/><path d="M7.4 7.6L10.8 11.4" stroke="#c3c9dd" stroke-width="1.5"/><path d="M9.6 2.4H15L12.3 5.8Z" fill="#c3c9dd"/></svg>
<div class="a" style="left:1155px;top:67px;font-size:14px;line-height:20px;font-style:italic;color:#d4d8e6;white-space:nowrap">搜索当前视图</div>
<svg style="left:1596px;top:74px" width="6" height="6" viewBox="0 0 6 6" ><path d="M.4 .4L5.6 5.6M5.6 .4L.4 5.6" stroke="#d4d8e6" stroke-width="1.2"/></svg>
<div class="a" style="left:1624px;top:65px;width:12px;height:24px;border-radius:5px;background:#2e3854"></div>
<div class="p" style="left:0;top:531px;width:1630px;height:429px"></div>
<div class="dots" style="left:3px;top:536px"></div>
<div class="a" style="left:0;top:543px;width:1630px;height:1px;background:#27314e"></div>
<svg style="left:21px;top:552px" width="24" height="17" viewBox="0 0 24 17" ><rect width="24" height="17" rx="2" fill="#c3c9dd"/><path d="M2 2.4H22M2 14.6H22" stroke="#222b41" stroke-width="1.6" stroke-dasharray="2 1.6"/><rect x="2.6" y="5" width="8.4" height="7" fill="#222b41"/><rect x="13" y="5" width="8.4" height="7" fill="#222b41"/></svg>
<div class="a" style="left:70px;top:545px;width:65px;height:30px;background:#131724"></div>
<svg style="left:91px;top:552px" width="23" height="16" viewBox="0 0 23 16" ><rect width="23" height="16" rx="2" fill="#09a8fc"/><path d="M2 7.2H21M2 11.4H21" stroke="#131724" stroke-width="1.6"/><path d="M11 2.4H18L14.5 6.6Z" fill="#131724"/></svg>
<svg style="left:164px;top:550px" width="19" height="22" viewBox="0 0 19 22" ><rect x="1" y="1" width="10" height="14" rx="2" fill="none" stroke="#c3c9dd" stroke-width="1.8"/><path d="M5.6 5.4H14L19 10.4V20.4Q19 22 17.4 22H7.2Q5.6 22 5.6 20.4Z" fill="#c3c9dd" stroke="#222b41" stroke-width="1"/><path d="M13.6 5.6V10.8H18.8" fill="none" stroke="#222b41" stroke-width="1.2"/><path d="M3 15H10.4M8 12L11.4 15L8 18" fill="none" stroke="#222b41" stroke-width="3"/><path d="M3 15H10.4M8 12.2L11.2 15L8 17.8" fill="none" stroke="#c3c9dd" stroke-width="1.5"/></svg>
<svg style="left:211px;top:550px" width="18" height="19" viewBox="0 0 18 19" ><path d="M4.4 4.4L14 14.6" stroke="#c3c9dd" stroke-width="3"/><circle cx="3.8" cy="3.8" r="3.7" fill="#c3c9dd"/><path d="M-0.5 -0.5L4.2 -0.5L4.2 3.2L0.8 5L-0.5 4Z" fill="#222b41"/><circle cx="14.4" cy="15" r="3.6" fill="#c3c9dd"/><path d="M18.5 19L14.2 19L14 15.6L17.2 13.6L18.5 14.6Z" fill="#222b41"/><path d="M14.4 0.6L17.8 4L7.6 14.2L4.2 10.8Z" fill="#c3c9dd" stroke="#222b41" stroke-width=".9"/><path d="M11.4 3.2L15.2 7" stroke="#222b41" stroke-width="1.1"/><path d="M12.6 5.2L14.2 3.6" stroke="#222b41" stroke-width="1"/><path d="M4.2 10.8L7.6 14.2L2.8 17.6L0.4 18.4L1.2 15.8Z" fill="#c3c9dd" stroke="#222b41" stroke-width=".9"/></svg>
<div class="a" style="left:234px;top:549px;width:1px;height:20px;background:#0c0e16"></div>
<svg style="left:253px;top:552px" width="18" height="18" viewBox="0 0 18 18" ><path d="M7 0V4Q17 4 17 11Q17 15.4 12.6 17.6Q14.6 14.4 13 11.8Q11.4 9.6 7 9.8V13.6L0 6.8Z" fill="#4a5b7e"/></svg>
<svg style="left:307px;top:552px" width="18" height="18" viewBox="0 0 18 18" ><path d="M11 0V4Q1 4 1 11Q1 15.4 5.4 17.6Q3.4 14.4 5 11.8Q6.6 9.6 11 9.8V13.6L18 6.8Z" fill="#4a5b7e"/></svg>
<svg style="left:360px;top:551px" width="23" height="16" viewBox="0 0 23 16" ><g fill="none" stroke="#c3c9dd" stroke-width="1.6"><path d="M1 0V16M22 0V16"/><path d="M3.4 8H10.4M6.8 4.6L3.4 8L6.8 11.4M19.6 8H12.6M16.2 4.6L19.6 8L16.2 11.4" stroke-width="1.8"/></g></svg>
<svg style="left:415px;top:550px" width="23" height="18" viewBox="0 0 23 18" ><g fill="none" stroke="#c3c9dd" stroke-width="1.6"><rect x="1" y="1" width="21" height="16"/><path d="M4.4 6H11M7 3.4L4.4 6L7 8.6M18.6 12H12M16 9.4L18.6 12L16 14.6" stroke-width="1.2"/></g></svg>
<svg style="left:469px;top:550px" width="25" height="18" viewBox="0 0 25 18" ><g fill="none" stroke="#c3c9dd" stroke-width="1.6"><path d="M12.5 0V18" stroke-width="2"/><path d="M1.4 9H9.8M5.4 5L1.4 9L5.4 13M23.6 9H15.2M19.6 5L23.6 9L19.6 13"/></g></svg>
<svg style="left:523px;top:551px" width="27" height="16" viewBox="0 0 27 16" ><g fill="none" stroke="#c3c9dd" stroke-width="1.6"><rect x="9" y="1" width="9" height="14" stroke-width="1.8"/><path d="M0.8 8H7.4M4.2 4.8L0.8 8L4.2 11.2M26.2 8H19.6M22.8 4.8L26.2 8L22.8 11.2" stroke-width="1.3"/></g></svg>
<svg style="left:582px;top:552px" width="22" height="16" viewBox="0 0 22 16" ><circle cx="8" cy="8" r="8" fill="#c3c9dd"/><g fill="#222b41"><circle cx="8" cy="3.6" r="2"/><circle cx="3.8" cy="6.8" r="2"/><circle cx="12.2" cy="6.8" r="2"/><circle cx="5.4" cy="11.8" r="2"/><circle cx="10.6" cy="11.8" r="2"/><circle cx="8" cy="8" r=".9"/></g><circle cx="16.6" cy="11" r="4.4" fill="#d00404"/></svg>
<svg style="left:635px;top:551px" width="22" height="20" viewBox="0 0 22 20" ><ellipse cx="3.2" cy="13.4" rx="3.2" ry="2.6" fill="#c3c9dd"/><path d="M5.6 13.4V3.4L10.6 2V6" fill="none" stroke="#c3c9dd" stroke-width="1.6"/><path d="M9.6 10L11.4 6L12.6 14L14.4 0L16.2 20L17.8 3L19.2 15L20.4 7L21.6 11" fill="none" stroke="#c3c9dd" stroke-width="1.7" stroke-linejoin="round"/></svg>
<svg style="left:690px;top:552px" width="21" height="16" viewBox="0 0 21 16" ><rect width="21" height="16" fill="#c3c9dd"/><path d="M1 2H20M1 14H20" stroke="#222b41" stroke-width="1.5" stroke-dasharray="1.8 1.4"/><rect x="2.4" y="4.6" width="4" height="6.8" fill="#222b41" opacity=".85"/><path d="M10.6 13V2.4Q14 1 15.4 4.6" fill="none" stroke="#222b41" stroke-width="3.2"/><ellipse cx="8.6" cy="13" rx="3.4" ry="2.8" fill="#222b41"/><path d="M10.6 13V2.4Q14 1 15.4 4.6" fill="none" stroke="#c3c9dd" stroke-width="1.5"/><ellipse cx="8.6" cy="13" rx="2.6" ry="2" fill="#c3c9dd"/><rect x="15.4" y="6.4" width="3.4" height="5" fill="#222b41" opacity=".85"/></svg>
<svg style="left:732px;top:551px" width="24" height="17" viewBox="0 0 24 17" ><circle cx="17.8" cy="6" r="6" fill="#c3c9dd"/><circle cx="11.6" cy="8.6" r="6" fill="#c3c9dd" stroke="#222b41" stroke-width="1"/><circle cx="6" cy="11" r="6" fill="#c3c9dd" stroke="#222b41" stroke-width="1"/></svg>
<svg style="left:786px;top:553px" width="22" height="15" viewBox="0 0 22 15" ><rect width="22" height="15" fill="#c3c9dd"/><path d="M3 3H11V5.4H8.4V11H5.6V5.4H3Z" fill="#222b41"/><path d="M12.6 4H19.6M12.6 6.8H19.6M12.6 9.6H19.6M3 12.4H19.6" stroke="#222b41" stroke-width="1.1"/></svg>
<svg style="left:842px;top:553px" width="22" height="15" viewBox="0 0 22 15" ><rect x="1" y="1" width="20" height="13" fill="none" stroke="#c3c9dd" stroke-width="2"/><path d="M11 1V14M1 7.5H21" stroke="#c3c9dd" stroke-width="1.6"/></svg>
<svg style="left:897px;top:551px" width="25" height="19" viewBox="0 0 25 19" ><path d="M0 5H8M0 8H6.4M1 11H7.4" stroke="#c3c9dd" stroke-width="1.4"/><circle cx="19.6" cy="2.4" r="2.2" fill="#c3c9dd"/><path d="M10 6.4L13 3.8L17 5L14.4 10L17.4 12.6L15.8 18.2M14.4 10L11.6 13.6L7 13M17 5L19 8.4L23 7.4" fill="none" stroke="#c3c9dd" stroke-width="2" stroke-linejoin="round" stroke-linecap="round"/></svg>
<svg style="left:952px;top:551px" width="23" height="19" viewBox="0 0 23 19" ><path d="M3 5Q8 1 12 2Q19 0 21 7Q23 13 17 15Q12 19 8 14Q3 13 1 10Q0 7 3 5Z" fill="none" stroke="#c3c9dd" stroke-width="1.5"/><g fill="#c3c9dd"><circle cx="3" cy="5" r="1.3"/><circle cx="12" cy="2" r="1.3"/><circle cx="21" cy="7" r="1.3"/><circle cx="17" cy="15" r="1.3"/><circle cx="8" cy="14" r="1.3"/><circle cx="1.2" cy="10" r="1.3"/><circle cx="12.4" cy="17.4" r="1.3"/></g></svg>
<svg style="left:1002px;top:551px" width="22" height="17" viewBox="0 0 22 17" ><path d="M0.9 5V0.9H5M17 0.9H21.1V5M21.1 12V16.1H17M5 16.1H0.9V12" fill="none" stroke="#c3c9dd" stroke-width="1.8"/><rect x="5.6" y="4.4" width="10.8" height="8.2" fill="none" stroke="#c3c9dd" stroke-width="1" stroke-dasharray="1.4 1"/><path d="M11 6.2V10.8M8.6 8.5H13.4" stroke="#c3c9dd" stroke-width="1.1"/></svg>
<svg style="left:1055px;top:552px" width="26" height="17" viewBox="0 0 26 17" ><path d="M0 0H16V3.6H10V16.4H6V3.6H0Z" fill="#c3c9dd"/><text x="12.4" y="16.4" font-family="Liberation Sans" font-size="10" letter-spacing="-.6" fill="#c3c9dd">3D</text></svg>
<svg style="left:1117px;top:552px" width="23" height="17" viewBox="0 0 23 17" ><rect x="0" y="0" width="19" height="15" fill="#c3c9dd"/><path d="M0.6 0.6L9 9L19 -1" fill="none" stroke="#222b41" stroke-width="1.4"/><path d="M10 17L11 12.6L18.6 5L22 8.4L14.4 16Z" fill="#c3c9dd" stroke="#222b41" stroke-width="1"/></svg>
<svg style="left:1170px;top:551px" width="23" height="18" viewBox="0 0 23 18" ><rect x="0" y="2" width="21" height="16" fill="#c3c9dd"/><path d="M1 4H20M1 16H20" stroke="#222b41" stroke-width="1.4" stroke-dasharray="1.6 1.4"/><rect x="3" y="6.4" width="15" height="7.4" fill="#222b41" opacity=".55"/><path d="M6 14.6L7 11L17.6 1.4L20.4 4.2L9.6 13.8Z" fill="#c3c9dd" stroke="#222b41" stroke-width="1"/><circle cx="20.6" cy="1.8" r="1.8" fill="#c3c9dd"/></svg>
<svg style="left:1437px;top:551px" width="19" height="19" viewBox="0 0 19 19" ><circle cx="7.4" cy="7.4" r="6.4" fill="none" stroke="#c3c9dd" stroke-width="1.5"/><path d="M12.2 12.2L18 18" stroke="#c3c9dd" stroke-width="1.8"/><path d="M4 7.4H10.8" stroke="#c3c9dd" stroke-width="1.6"/></svg>
<div class="a" style="left:1466px;top:557px;width:72px;height:4px;border-radius:2px;background:#000"></div>
<svg style="left:1513px;top:555px" width="8" height="11" viewBox="0 0 8 11" ><path d="M0 0H8V7L4 11L0 7Z" fill="#c3c9dd"/></svg>
<svg style="left:1551px;top:551px" width="19" height="19" viewBox="0 0 19 19" ><circle cx="7.4" cy="7.4" r="6.4" fill="none" stroke="#c3c9dd" stroke-width="1.5"/><path d="M12.2 12.2L18 18" stroke="#c3c9dd" stroke-width="1.8"/><path d="M4 7.4H10.8M7.4 4V10.8" stroke="#c3c9dd" stroke-width="1.6"/></svg>
<svg style="left:1586px;top:553px" width="16" height="13" viewBox="0 0 16 13" ><rect x=".6" y=".6" width="14.8" height="11.8" fill="none" stroke="#c3c9dd" stroke-width="1.2"/><path d="M3.4 6.5H12.6M5.6 4.2L3.2 6.5L5.6 8.8M10.4 4.2L12.8 6.5L10.4 8.8" fill="none" stroke="#c3c9dd" stroke-width="1.2"/></svg>
<svg style="left:1619px;top:551px" width="16" height="16" viewBox="0 0 16 16" ><circle cx="8" cy="8" r="8" fill="#c3c9dd"/><path d="M8 1V8H14" fill="none" stroke="#222b41" stroke-width="1.4"/></svg>
<div class="a" style="left:0;top:577px;width:1630px;height:34px;background:#131724"></div>
<div class="a" style="left:198px;top:577px;width:1432px;height:24px;background:#161b2a"></div>
<div class="a" style="left:198px;top:601px;width:1432px;height:10px;background:#222b41"></div>
<div class="a" style="left:198px;top:600px;width:1432px;height:1px;background:#6a7390"></div>
<div class="a" style="left:0;top:611px;width:198px;height:1px;background:#000"></div>
<div class="a" style="left:198px;top:577px;width:1px;height:23px;background:#6a7390"></div>
<div class="a" style="left:273px;top:587px;width:1px;height:13px;background:#6a7390"></div>
<div class="rl" style="left:200px">00:00:00:00</div>
<div class="a" style="left:348px;top:582px;width:1px;height:18px;background:#6a7390"></div>
<div class="a" style="left:423px;top:587px;width:1px;height:13px;background:#6a7390"></div>
<div class="rl" style="left:350px">00:00:02:00</div>
<div class="a" style="left:498px;top:582px;width:1px;height:18px;background:#6a7390"></div>
<div class="a" style="left:573px;top:587px;width:1px;height:13px;background:#6a7390"></div>
<div class="rl" style="left:500px">00:00:04:00</div>
<div class="a" style="left:648px;top:582px;width:1px;height:18px;background:#6a7390"></div>
<div class="a" style="left:723px;top:587px;width:1px;height:13px;background:#6a7390"></div>
<div class="rl" style="left:650px">00:00:06:00</div>
<div class="a" style="left:798px;top:582px;width:1px;height:18px;background:#6a7390"></div>
<div class="a" style="left:873px;top:587px;width:1px;height:13px;background:#6a7390"></div>
<div class="rl" style="left:800px">00:00:08:00</div>
<div class="a" style="left:948px;top:582px;width:1px;height:18px;background:#6a7390"></div>
<div class="a" style="left:1023px;top:587px;width:1px;height:13px;background:#6a7390"></div>
<div class="rl" style="left:950px">00:00:10:00</div>
<div class="a" style="left:1098px;top:582px;width:1px;height:18px;background:#6a7390"></div>
<div class="a" style="left:1173px;top:587px;width:1px;height:13px;background:#6a7390"></div>
<div class="rl" style="left:1100px">00:00:12:00</div>
<div class="a" style="left:1248px;top:582px;width:1px;height:18px;background:#6a7390"></div>
<div class="a" style="left:1323px;top:587px;width:1px;height:13px;background:#6a7390"></div>
<div class="rl" style="left:1250px">00:00:14:00</div>
<div class="a" style="left:1398px;top:582px;width:1px;height:18px;background:#6a7390"></div>
<div class="a" style="left:1473px;top:587px;width:1px;height:13px;background:#6a7390"></div>
<div class="rl" style="left:1400px">00:00:16:00</div>
<div class="a" style="left:1548px;top:582px;width:1px;height:18px;background:#6a7390"></div>
<div class="a" style="left:1623px;top:587px;width:1px;height:13px;background:#6a7390"></div>
<div class="rl" style="left:1550px">00:00:18:00</div>
<div class="a" style="left:1128px;top:578px;width:2px;height:23px;background:#e8ecf8"></div>
<svg style="left:192px;top:581px" width="9" height="13" viewBox="0 0 9 13" ><path d="M0 0H9V8.6L4.5 13L0 8.6Z" fill="#ece6cc"/><path d="M6 0H9V8.6L6 11.6Z" fill="#d8d0b0" opacity=".0"/></svg>
<svg style="left:22px;top:589px" width="20" height="12" viewBox="0 0 20 12" ><path d="M2.2 0.6H0.8V11.2H2.2M0.8 5.8H1.8" fill="none" stroke="#c3c9dd" stroke-width="1"/><path d="M4.6 1.5H13.4M4.6 5.8H13.4M4.6 10H13.4" stroke="#c3c9dd" stroke-width="3"/><path d="M17 0V5M14.8 2.6L17 5.2L19.2 2.6M17 12V7M14.8 9.4L17 6.8L19.2 9.4" fill="none" stroke="#c3c9dd" stroke-width="1.3"/></svg>
<svg style="left:76px;top:589px" width="17" height="12" viewBox="0 0 17 12" ><path d="M0 1.5H9M0 5.8H9M0 10H9" stroke="#c3c9dd" stroke-width="3"/><path d="M11.4 3H16.4M13.9 0.4V5.6M11.4 9.6H16.4" stroke="#c3c9dd" stroke-width="1.1"/></svg>
<svg style="left:118px;top:589px" width="12" height="9" viewBox="0 0 12 9" ><path d="M0 9L6 0L12 9Z" fill="#00e87a"/></svg>
<svg style="left:132px;top:592px" width="6" height="3" viewBox="0 0 6 3" ><path d="M0 0H6L3 3Z" fill="#c3c9dd"/></svg>
<div class="a" style="left:0;top:612px;width:197px;height:348px;background:#222b41"></div>
<div class="a" style="left:197px;top:612px;width:1433px;height:348px;background:#161b2a"></div>
<div class="a" style="left:199px;top:672px;width:1431px;height:1px;background:#28324e"></div>
<div class="a" style="left:1px;top:671px;width:26px;height:3px;background:#2e3a58"></div>
<div class="a" style="left:49px;top:614px;width:1px;height:56px;background:#2e3854"></div>
<div class="tn" style="top:620px">视频</div>
<svg style="left:64px;top:646px" width="13" height="13" viewBox="0 0 13 13" ><g fill="none" stroke="#c3c9dd" stroke-width="1.7" stroke-linecap="round"><path d="M5.6 4.1L7.4 2.3A2.3 2.3 0 0 1 10.7 5.6L8.6 7.7A2.3 2.3 0 0 1 5.6 7.9"/><path d="M7.4 8.9L5.6 10.7A2.3 2.3 0 0 1 2.3 7.4L4.4 5.3A2.3 2.3 0 0 1 7.4 5.1"/></g></svg>
<svg style="left:79px;top:655px" width="6" height="4" viewBox="0 0 6 4" ><path d="M0 0H6L3 4Z" fill="#c3c9dd"/></svg>
<svg style="left:111px;top:646px" width="17" height="12" viewBox="0 0 17 12" ><path d="M0 3.6H3L8 0V12L3 8.4H0Z" fill="#c3c9dd"/><path d="M10 3.4Q11.8 6 10 8.6M12.8 1.2Q16.4 6 12.8 10.8" fill="none" stroke="#c3c9dd" stroke-width="1.6" stroke-linecap="round"/></svg>
<svg style="left:160.75px;top:645.75px" width="12.5" height="12.5" viewBox="0 0 12.5 12.5" ><rect x="-.7" y="-.7" width="13.9" height="13.9" fill="#161c32"/><rect x="0.0" y="0.0" width="2.5" height="2.5" fill="#dfe3f6"/><rect x="5.0" y="0.0" width="2.5" height="2.5" fill="#dfe3f6"/><rect x="10.0" y="0.0" width="2.5" height="2.5" fill="#dfe3f6"/><rect x="2.5" y="2.5" width="2.5" height="2.5" fill="#b6bdd8"/><rect x="7.5" y="2.5" width="2.5" height="2.5" fill="#b6bdd8"/><rect x="0.0" y="5.0" width="2.5" height="2.5" fill="#dfe3f6"/><rect x="5.0" y="5.0" width="2.5" height="2.5" fill="#dfe3f6"/><rect x="10.0" y="5.0" width="2.5" height="2.5" fill="#dfe3f6"/><rect x="2.5" y="7.5" width="2.5" height="2.5" fill="#b6bdd8"/><rect x="7.5" y="7.5" width="2.5" height="2.5" fill="#b6bdd8"/><rect x="0.0" y="10.0" width="2.5" height="2.5" fill="#dfe3f6"/><rect x="5.0" y="10.0" width="2.5" height="2.5" fill="#dfe3f6"/><rect x="10.0" y="10.0" width="2.5" height="2.5" fill="#dfe3f6"/></svg>
<div class="a" style="left:199px;top:733px;width:1431px;height:1px;background:#28324e"></div>
<div class="a" style="left:1px;top:732px;width:26px;height:3px;background:#2e3a58"></div>
<div class="a" style="left:49px;top:675px;width:1px;height:56px;background:#2e3854"></div>
<div class="tn" style="top:681px">叠加1</div>
<svg style="left:64px;top:707px" width="13" height="13" viewBox="0 0 13 13" ><g fill="none" stroke="#4a5b7e" stroke-width="1.7" stroke-linecap="round"><path d="M5.6 4.1L7.4 2.3A2.3 2.3 0 0 1 10.7 5.6L8.6 7.7A2.3 2.3 0 0 1 5.6 7.9"/><path d="M7.4 8.9L5.6 10.7A2.3 2.3 0 0 1 2.3 7.4L4.4 5.3A2.3 2.3 0 0 1 7.4 5.1"/></g></svg>
<svg style="left:111px;top:708px" width="17" height="12" viewBox="0 0 17 12" ><path d="M0 3.6H3L8 0V12L3 8.4H0Z" fill="#c3c9dd"/><path d="M10 3.4Q11.8 6 10 8.6M12.8 1.2Q16.4 6 12.8 10.8" fill="none" stroke="#c3c9dd" stroke-width="1.6" stroke-linecap="round"/></svg>
<svg style="left:160.75px;top:704.75px" width="12.5" height="12.5" viewBox="0 0 12.5 12.5" ><rect x="-.7" y="-.7" width="13.9" height="13.9" fill="#161c32"/><rect x="0.0" y="0.0" width="2.5" height="2.5" fill="#dfe3f6"/><rect x="5.0" y="0.0" width="2.5" height="2.5" fill="#dfe3f6"/><rect x="10.0" y="0.0" width="2.5" height="2.5" fill="#dfe3f6"/><rect x="2.5" y="2.5" width="2.5" height="2.5" fill="#b6bdd8"/><rect x="7.5" y="2.5" width="2.5" height="2.5" fill="#b6bdd8"/><rect x="0.0" y="5.0" width="2.5" height="2.5" fill="#dfe3f6"/><rect x="5.0" y="5.0" width="2.5" height="2.5" fill="#dfe3f6"/><rect x="10.0" y="5.0" width="2.5" height="2.5" fill="#dfe3f6"/><rect x="2.5" y="7.5" width="2.5" height="2.5" fill="#b6bdd8"/><rect x="7.5" y="7.5" width="2.5" height="2.5" fill="#b6bdd8"/><rect x="0.0" y="10.0" width="2.5" height="2.5" fill="#dfe3f6"/><rect x="5.0" y="10.0" width="2.5" height="2.5" fill="#dfe3f6"/><rect x="10.0" y="10.0" width="2.5" height="2.5" fill="#dfe3f6"/></svg>
<div class="a" style="left:199px;top:784px;width:1431px;height:1px;background:#28324e"></div>
<div class="a" style="left:1px;top:783px;width:26px;height:3px;background:#2e3a58"></div>
<div class="a" style="left:49px;top:736px;width:1px;height:46px;background:#2e3854"></div>
<div class="tn" style="top:737px">标题1</div>
<svg style="left:64px;top:763px" width="13" height="13" viewBox="0 0 13 13" ><g fill="none" stroke="#4a5b7e" stroke-width="1.7" stroke-linecap="round"><path d="M5.6 4.1L7.4 2.3A2.3 2.3 0 0 1 10.7 5.6L8.6 7.7A2.3 2.3 0 0 1 5.6 7.9"/><path d="M7.4 8.9L5.6 10.7A2.3 2.3 0 0 1 2.3 7.4L4.4 5.3A2.3 2.3 0 0 1 7.4 5.1"/></g></svg>
<div class="a" style="left:199px;top:835px;width:1431px;height:1px;background:#28324e"></div>
<div class="a" style="left:1px;top:834px;width:26px;height:3px;background:#2e3a58"></div>
<div class="a" style="left:49px;top:787px;width:1px;height:46px;background:#2e3854"></div>
<div class="tn" style="top:788px">声音</div>
<svg style="left:64px;top:814px" width="13" height="13" viewBox="0 0 13 13" ><g fill="none" stroke="#4a5b7e" stroke-width="1.7" stroke-linecap="round"><path d="M5.6 4.1L7.4 2.3A2.3 2.3 0 0 1 10.7 5.6L8.6 7.7A2.3 2.3 0 0 1 5.6 7.9"/><path d="M7.4 8.9L5.6 10.7A2.3 2.3 0 0 1 2.3 7.4L4.4 5.3A2.3 2.3 0 0 1 7.4 5.1"/></g></svg>
<svg style="left:111px;top:815px" width="17" height="12" viewBox="0 0 17 12" ><path d="M0 3.6H3L8 0V12L3 8.4H0Z" fill="#c3c9dd"/><path d="M10 3.4Q11.8 6 10 8.6M12.8 1.2Q16.4 6 12.8 10.8" fill="none" stroke="#c3c9dd" stroke-width="1.6" stroke-linecap="round"/></svg>
<svg style="left:161px;top:817px" width="12" height="7" viewBox="0 0 12 7" ><path d="M0.6 0.8H3L4.4 5H7.6L9 0.8H11.4" fill="none" stroke="#c3c9dd" stroke-width="1.7" stroke-linejoin="round"/></svg>
<div class="a" style="left:199px;top:886px;width:1431px;height:1px;background:#28324e"></div>
<div class="a" style="left:1px;top:885px;width:26px;height:3px;background:#2e3a58"></div>
<div class="a" style="left:49px;top:838px;width:1px;height:46px;background:#2e3854"></div>
<div class="tn" style="top:839px">音乐1</div>
<svg style="left:64px;top:865px" width="13" height="13" viewBox="0 0 13 13" ><g fill="none" stroke="#4a5b7e" stroke-width="1.7" stroke-linecap="round"><path d="M5.6 4.1L7.4 2.3A2.3 2.3 0 0 1 10.7 5.6L8.6 7.7A2.3 2.3 0 0 1 5.6 7.9"/><path d="M7.4 8.9L5.6 10.7A2.3 2.3 0 0 1 2.3 7.4L4.4 5.3A2.3 2.3 0 0 1 7.4 5.1"/></g></svg>
<svg style="left:111px;top:866px" width="17" height="12" viewBox="0 0 17 12" ><path d="M0 3.6H3L8 0V12L3 8.4H0Z" fill="#c3c9dd"/><path d="M10 3.4Q11.8 6 10 8.6M12.8 1.2Q16.4 6 12.8 10.8" fill="none" stroke="#c3c9dd" stroke-width="1.6" stroke-linecap="round"/></svg>
<svg style="left:161px;top:868px" width="12" height="7" viewBox="0 0 12 7" ><path d="M0.6 0.8H3L4.4 5H7.6L9 0.8H11.4" fill="none" stroke="#c3c9dd" stroke-width="1.7" stroke-linejoin="round"/></svg>
<div class="a" style="left:199px;top:888px;width:27px;height:1px;background:#28324e"></div>
<svg style="left:6px;top:637px" width="21" height="13" viewBox="0 0 21 13" ><rect width="15" height="13" rx="2" fill="#c3c9dd"/><path d="M15.6 4.4L20.6 1.2V11.8L15.6 8.6Z" fill="#c3c9dd"/><path d="M5.6 3.4L10.4 6.5L5.6 9.6Z" fill="#222b41"/></svg>
<svg style="left:6px;top:698px" width="21" height="13" viewBox="0 0 21 13" ><rect width="15" height="13" rx="2" fill="#c3c9dd"/><path d="M15.6 4.4L20.6 1.2V11.8L15.6 8.6Z" fill="#c3c9dd"/><path d="M5.4 4.6L8 2.8H9V10.4H7V5L5.4 5.8Z" fill="#222b41"/></svg>
<svg style="left:5px;top:753px" width="17" height="12" viewBox="0 0 17 12" ><path d="M7.4 0H16.4V2.2H13V11.6H10.8V2.2H7.4Z" fill="#c3c9dd"/><path d="M0.4 7.6L2 6.4H3V11.6H1.7V8L0.4 8.8Z" fill="#c3c9dd"/></svg>
<svg style="left:11px;top:805px" width="17" height="12" viewBox="0 0 17 12" ><circle cx="3.6" cy="3.6" r="3.4" fill="#c3c9dd"/><path d="M6 5.6L11.4 9.2" stroke="#c3c9dd" stroke-width="3.4" stroke-linecap="round"/><path d="M11.4 9.6Q14 11.6 16.4 9.4" fill="none" stroke="#c3c9dd" stroke-width="1"/></svg>
<svg style="left:5px;top:855px" width="18" height="12" viewBox="0 0 18 12" ><path d="M0.4 6.6L2 5.4H3V11.2H1.7V7L0.4 7.8Z" fill="#c3c9dd"/><ellipse cx="7.6" cy="9.2" rx="2.2" ry="1.9" fill="#c3c9dd"/><ellipse cx="14.4" cy="9.8" rx="2.2" ry="1.9" fill="#c3c9dd"/><path d="M9.2 9.2V1.2L16 0.6V9.8" fill="none" stroke="#c3c9dd" stroke-width="1.4"/><path d="M9.2 2.2L16 1.6" stroke="#c3c9dd" stroke-width="2.2"/></svg>
<div class="a" style="left:197px;top:612px;width:1px;height:348px;background:#3050c0"></div>
<div class="a" style="left:198px;top:612px;width:1px;height:348px;background:#f4f6ff"></div>
</body></html>
